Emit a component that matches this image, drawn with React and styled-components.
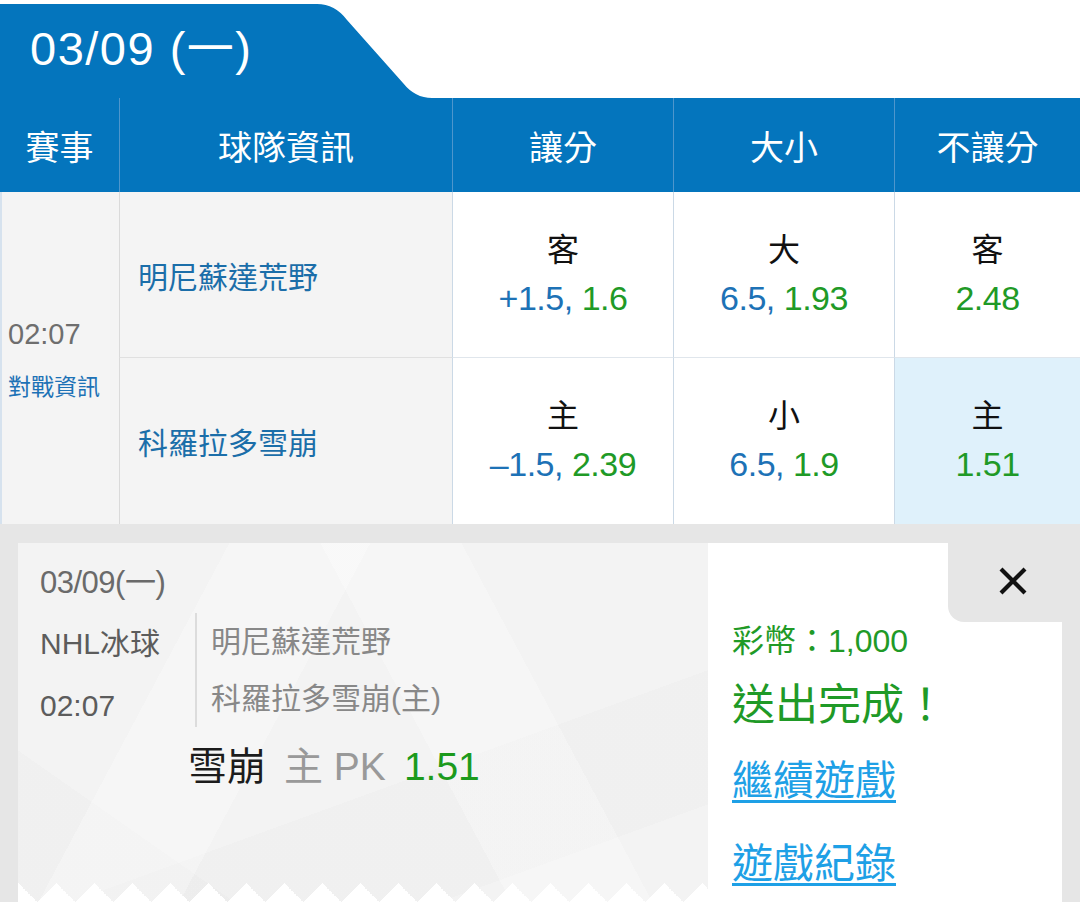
import React from 'react';
import styled, { createGlobalStyle } from 'styled-components';

const font = `"Liberation Sans", "Noto Sans CJK TC", sans-serif`;
const blue = '#0475bd';
const oddsBlue = '#1d72b6';
const green = '#1f9a27';

const GlobalStyle = createGlobalStyle`
  * { box-sizing: border-box; }
  body {
    margin: 0;
    background: #fff;
    font-family: ${font};
  }
`;

const Page = styled.div`
  width: 1080px;
  height: 902px;
  overflow: hidden;
  display: flex;
  flex-direction: column;
`;

const TabRow = styled.div`
  padding-top: 4px;
  display: flex;
`;

const DateTab = styled.div`
  width: 440px;
  height: 94px;
  background: ${blue};
  color: #fff;
  font-size: 47px;
  letter-spacing: 1.5px;
  line-height: 90px;
  padding-left: 30px;
  clip-path: path('M0 0 H317 Q335 0 347 16 L403 79 Q415 94 432 94 H0 Z');
`;

const HeaderRow = styled.div`
  display: grid;
  grid-template-columns: 119px 333px 221px 221px 1fr;
  height: 94px;
  background: ${blue};
`;

const HeadCell = styled.div`
  display: flex;
  align-items: center;
  justify-content: center;
  color: #fff;
  font-size: 34px;
  border-left: ${({ $first }) => ($first ? 'none' : '1px solid #4e96cc')};
`;

const Body = styled.div`
  display: grid;
  grid-template-columns: 119px 333px 221px 221px 1fr;
  grid-template-rows: 166px 166px;
`;

const MatchCell = styled.div`
  grid-row: span 2;
  background: #f4f4f4;
  border-left: 2px solid #d6e2ee;
  display: flex;
  flex-direction: column;
  justify-content: center;
  padding-left: 6px;
  padding-top: 2px;
`;

const KickOff = styled.div`
  color: #6e6e6e;
  font-size: 29px;
  line-height: 34px;
`;

const VsInfo = styled.div`
  color: ${oddsBlue};
  font-size: 23px;
  line-height: 30px;
  margin-top: 21px;
`;

const TeamCell = styled.div`
  background: #f4f4f4;
  border-left: 1px solid #dadada;
  border-bottom: ${({ $top }) => ($top ? '1px solid #e0e0e0' : 'none')};
  display: flex;
  align-items: center;
  padding-left: 18px;
  color: #1b6ea9;
  font-size: 30px;
`;

const OddsCell = styled.div`
  background: ${({ $picked }) => ($picked ? '#dff1fb' : '#fff')};
  border-left: 1px solid #cbd9e6;
  border-bottom: ${({ $top }) => ($top ? '1px solid #e0e6ec' : 'none')};
  display: flex;
  flex-direction: column;
  align-items: center;
  justify-content: center;
  padding-bottom: 2px;
`;

const OddsLabel = styled.div`
  color: #111;
  font-size: 32px;
  line-height: 48px;
`;

const OddsValue = styled.div`
  font-size: 34px;
  line-height: 48px;
  letter-spacing: -0.5px;
`;

const Line = styled.span`
  color: ${oddsBlue};
`;

const Price = styled.span`
  color: ${green};
`;

const BetArea = styled.div`
  flex: 1;
  background: #e6e6e6;
  padding: 19px 18px 0;
  display: flex;
`;

const TicketInfo = styled.div`
  width: 690px;
  display: flex;
  flex-direction: column;
  background-color: #f3f3f3;
  background-image:
    linear-gradient(118deg, transparent 0 24%, rgba(255, 255, 255, 0.28) 24% 40%, transparent 40%),
    linear-gradient(62deg, transparent 0 56%, rgba(255, 255, 255, 0.25) 56% 72%, transparent 72%),
    linear-gradient(160deg, transparent 0 62%, rgba(0, 0, 0, 0.012) 62% 84%, transparent 84%),
    linear-gradient(35deg, rgba(0, 0, 0, 0.01) 0 18%, transparent 18%);
`;

const InfoBody = styled.div`
  flex: 1;
  padding: 22px 0 0 22px;
`;

const TicketDate = styled.div`
  color: #6a6a6a;
  font-size: 31px;
  line-height: 36px;
  letter-spacing: -0.5px;
`;

const MatchRow = styled.div`
  display: flex;
  margin-top: 12px;
`;

const LeagueCol = styled.div`
  width: 155px;
  color: #5c5c5c;
  font-size: 30px;
  line-height: 62px;
`;

const TeamsCol = styled.div`
  border-left: 2px solid #dcdcdc;
  padding-left: 14px;
  color: #888;
  font-size: 30px;
  line-height: 57px;
  height: 114px;
`;

const Pick = styled.div`
  margin: 7px 0 0 148px;
  font-size: 39px;
  line-height: 46px;
  display: flex;
  gap: 18px;
`;

const PickTeam = styled.span`
  color: #1c1c1c;
`;

const PickType = styled.span`
  color: #999;
`;

const PickPrice = styled.span`
  color: #1c9a1c;
`;

const Zigzag = styled.div`
  height: 19px;
  background: conic-gradient(from 135deg at 50% 0, #fff 90deg, transparent 0deg) 19px 0 / 38px 19px repeat-x;
`;

const ResultPanel = styled.div`
  width: 354px;
  background: #fff;
  display: flex;
  flex-direction: column;
`;

const PanelTop = styled.div`
  height: 79px;
  display: flex;
  justify-content: flex-end;
`;

const CloseTab = styled.button`
  width: 114px;
  height: 79px;
  border: none;
  background: #e6e6e6;
  border-bottom-left-radius: 16px;
  display: flex;
  align-items: center;
  justify-content: center;
  padding: 0 0 4px 16px;
  cursor: pointer;
`;

const PanelBody = styled.div`
  padding-left: 24px;
  display: flex;
  flex-direction: column;
  align-items: flex-start;
`;

const Coins = styled.div`
  color: ${green};
  font-size: 32px;
  line-height: 36px;
  margin-top: 1px;
`;

const Done = styled.div`
  color: ${green};
  font-size: 43px;
  line-height: 50px;
  margin-top: 21px;
`;

const ActionLink = styled.a`
  color: #1ea0e6;
  font-size: 41px;
  line-height: 48px;
  margin-top: ${({ $gap }) => $gap}px;
  text-decoration: underline;
  text-decoration-thickness: 3px;
  text-underline-offset: 5px;
  cursor: pointer;
`;

const rows = [
  {
    team: '明尼蘇達荒野',
    odds: [
      { label: '客', line: '+1.5', price: '1.6' },
      { label: '大', line: '6.5', price: '1.93' },
      { label: '客', price: '2.48' },
    ],
  },
  {
    team: '科羅拉多雪崩',
    odds: [
      { label: '主', line: '–1.5', price: '2.39' },
      { label: '小', line: '6.5', price: '1.9' },
      { label: '主', price: '1.51', picked: true },
    ],
  },
];

const heads = ['賽事', '球隊資訊', '讓分', '大小', '不讓分'];

const CloseIcon = () => (
  <svg width="30" height="30" viewBox="0 0 30 30">
    <path d="M3 3 L27 27 M27 3 L3 27" stroke="#111" strokeWidth="4.2" strokeLinecap="butt" />
  </svg>
);

const App = () => (
  <Page>
    <GlobalStyle />
    <TabRow>
      <DateTab>03/09 (一)</DateTab>
    </TabRow>

    <HeaderRow>
      {heads.map((h, i) => (
        <HeadCell key={h} $first={i === 0}>{h}</HeadCell>
      ))}
    </HeaderRow>

    <Body>
      <MatchCell>
        <KickOff>02:07</KickOff>
        <VsInfo>對戰資訊</VsInfo>
      </MatchCell>
      {rows.map((row, r) => (
        <React.Fragment key={row.team}>
          <TeamCell $top={r === 0}>{row.team}</TeamCell>
          {row.odds.map((o, i) => (
            <OddsCell key={i} $top={r === 0} $picked={o.picked}>
              <OddsLabel>{o.label}</OddsLabel>
              <OddsValue>
                {o.line && <Line>{o.line}, </Line>}
                <Price>{o.price}</Price>
              </OddsValue>
            </OddsCell>
          ))}
        </React.Fragment>
      ))}
    </Body>

    <BetArea>
      <TicketInfo>
        <InfoBody>
          <TicketDate>03/09(一)</TicketDate>
          <MatchRow>
            <LeagueCol>
              <div>NHL冰球</div>
              <div>02:07</div>
            </LeagueCol>
            <TeamsCol>
              <div>明尼蘇達荒野</div>
              <div>科羅拉多雪崩(主)</div>
            </TeamsCol>
          </MatchRow>
          <Pick>
            <PickTeam>雪崩</PickTeam>
            <PickType>主 PK</PickType>
            <PickPrice>1.51</PickPrice>
          </Pick>
        </InfoBody>
        <Zigzag />
      </TicketInfo>

      <ResultPanel>
        <PanelTop>
          <CloseTab aria-label="close">
            <CloseIcon />
          </CloseTab>
        </PanelTop>
        <PanelBody>
          <Coins>彩幣：1,000</Coins>
          <Done>送出完成！</Done>
          <ActionLink $gap={27}>繼續遊戲</ActionLink>
          <ActionLink $gap={35}>遊戲紀錄</ActionLink>
        </PanelBody>
      </ResultPanel>
    </BetArea>
  </Page>
);

export default App;
